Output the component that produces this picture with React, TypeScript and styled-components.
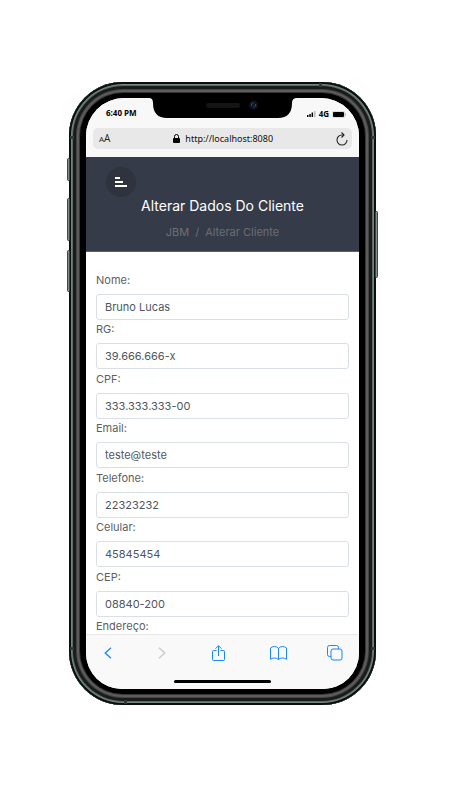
import React from "react";
import styled, { createGlobalStyle } from "styled-components";

const Global = createGlobalStyle`
  * { box-sizing: border-box; }
  body { margin: 0; background: #fff; font-family: Inter, "Open Sans", sans-serif; }
  button { border: 0; padding: 0; background: none; cursor: pointer; display: grid; place-items: center; }
  svg { display: block; }
`;

const Page = styled.main`
  display: flex;
  justify-content: center;
  min-height: 100vh;
  padding: 82px 73px 82px 69px;
`;

const Phone = styled.div`
  position: relative;
  display: flex;
  flex: 1;
  max-width: 440px;
  padding: 16px 17px;
  border-radius: 54px;
  background: #000;
  box-shadow:
    inset 0 0 0 2px #0b0f0e,
    inset 0 0 0 3px #72857f,
    inset 0 0 0 4px #5c6d68,
    inset 0 0 0 7px #1a1c1b,
    inset 0 0 0 8px #444,
    inset 0 0 0 10px #5c5c5c,
    inset 0 0 0 11px #363636;
`;

const SideKey = styled.i<{ $side: "left" | "right"; $top: number; $size: number }>`
  position: absolute;
  ${(p) => p.$side}: -2px;
  top: ${(p) => p.$top}px;
  width: 3px;
  height: ${(p) => p.$size}px;
  border: 1px solid #3d4946;
  border-radius: 2px;
  background: #7d8f89;
`;

const Band = styled.i<{ $edge: "left" | "right" | "top" | "bottom"; $at: number }>`
  position: absolute;
  ${(p) => p.$edge}: 1px;
  ${(p) =>
    p.$edge === "left" || p.$edge === "right"
      ? `${p.$at < 0 ? "bottom" : "top"}: ${Math.abs(p.$at)}px; width: 4px; height: 3px;`
      : `${p.$at < 0 ? "right" : "left"}: ${Math.abs(p.$at)}px; width: 3px; height: 4px;`}
  background: #2f3a37;
`;

const Screen = styled.div`
  position: relative;
  display: flex;
  flex: 1;
  flex-direction: column;
  min-width: 0;
  overflow: hidden;
  border-radius: 38px 38px 36px 36px;
  background: #fff;
`;

const Notch = styled.svg`
  position: absolute;
  top: 0;
  left: 50%;
  width: 148px;
  height: 20px;
  transform: translateX(-50%);
`;

const StatusBar = styled.div`
  display: flex;
  justify-content: space-between;
  align-items: center;
  height: 30px;
  padding: 0 13px 0 20px;
  background: #f8f8f8;
  color: #000;
  font: 700 8px/12px "Open Sans", sans-serif;
`;

const Signals = styled.div`
  display: flex;
  align-items: center;
  gap: 3px;
  padding-top: 2px;
`;

const AddressRow = styled.div`
  padding: 0 7px 8px;
  background: #f8f8f8;
`;

const AddressBar = styled.div`
  display: flex;
  justify-content: space-between;
  align-items: center;
  height: 21px;
  padding: 0 4px 0 6px;
  border-radius: 5px;
  background: #e8e8e8;
`;

const TextSize = styled.button`
  color: #222;
  font: 10px/14px "Open Sans", sans-serif;
  grid-auto-flow: column;
  align-items: baseline;
  small { font-size: 8px; }
`;

const Address = styled.span`
  display: flex;
  align-items: center;
  gap: 5px;
  color: #111;
  font: 9px/14px "Noto Sans", "Open Sans", sans-serif;
`;

const Header = styled.header`
  display: flex;
  flex-direction: column;
  height: 95px;
  padding: 10px 20px 0;
  border-bottom: 1px solid #5c5c6c;
  background: #363b49;
`;

const MenuButton = styled.button`
  width: 30px;
  height: 30px;
  border-radius: 50%;
  background: #2f333e;
`;

const Title = styled.h1`
  margin: 0;
  color: #fff;
  font-size: 14px;
  font-weight: 400;
  line-height: 18px;
  text-align: center;
`;

const Crumbs = styled.nav`
  display: flex;
  justify-content: center;
  gap: 6px;
  margin-top: 9px;
  color: #6a6e75;
  font-size: 11px;
  line-height: 16px;
  a { color: #6d6f75; text-decoration: none; }
`;

const Form = styled.form`
  display: flex;
  flex: 1;
  flex-direction: column;
  justify-content: space-between;
  padding: 20px 10px 0;
`;

const Field = styled.div`
  display: flex;
  flex-direction: column;
  gap: 6px;
`;

const Label = styled.label`
  color: #606060;
  font-size: 11px;
  line-height: 16px;
`;

const TextInput = styled.input`
  width: 100%;
  height: 26px;
  padding: 0 8px;
  border: 1px solid #dadee5;
  border-radius: 3px;
  background: #fff;
  color: #50565c;
  font: 11px/16px Inter, sans-serif;
`;

const Toolbar = styled.nav`
  display: grid;
  grid-template-columns: 54fr 56fr 60fr 57fr 16px;
  align-items: center;
  height: 37px;
  padding: 0 16px 0 14px;
  border-top: 1px solid #e8e8e8;
  background: #f9f9f9;
  color: #1a86f7;
`;

const ToolButton = styled.button`
  width: 16px;
  height: 20px;
  color: inherit;
  &:disabled { color: #c8c8c8; }
`;

const HomeArea = styled.div`
  display: grid;
  justify-content: center;
  height: 18px;
  padding-top: 9px;
  background: #f9f9f9;
`;

const HomeBar = styled.div`
  width: 97px;
  height: 3px;
  border-radius: 2px;
  background: #000;
`;

const fields = [
  { id: "nome", label: "Nome:", value: "Bruno Lucas" },
  { id: "rg", label: "RG:", value: "39.666.666-x" },
  { id: "cpf", label: "CPF:", value: "333.333.333-00" },
  { id: "email", label: "Email:", value: "teste@teste" },
  { id: "telefone", label: "Telefone:", value: "22323232" },
  { id: "celular", label: "Celular:", value: "45845454" },
  { id: "cep", label: "CEP:", value: "08840-200" },
];

const line = { fill: "none", stroke: "currentColor", strokeWidth: 1 } as const;

export default function App() {
  return (
    <Page>
      <Global />
      <Phone>
        <SideKey $side="left" $top={76} $size={23} />
        <SideKey $side="left" $top={116} $size={43} />
        <SideKey $side="left" $top={168} $size={42} />
        <SideKey $side="right" $top={129} $size={67} />
        <Band $edge="left" $at={54} />
        <Band $edge="right" $at={54} />
        <Band $edge="left" $at={-55} />
        <Band $edge="right" $at={-55} />
        <Band $edge="top" $at={-54} />
        <Band $edge="bottom" $at={55} />
        <Screen>
          <StatusBar>
            <span>6:40 PM</span>
            <Signals>
              <svg width="9" height="6" viewBox="0 0 9 6">
                <path d="M0 4h1.5v2H0zM2.3 3h1.5v3H2.3zM4.6 1.5h1.5V6H4.6z" fill="#000" />
                <path d="M7 0h1.5v6H7z" fill="#bbb" />
              </svg>
              <span>4G</span>
              <svg width="14" height="7" viewBox="0 0 14 7">
                <rect x=".3" y=".3" width="12.4" height="6.4" rx="1.5" fill="#fff" stroke="#aaa" strokeWidth=".5" />
                <rect x="1" y="1" width="11" height="5" rx="1" fill="#000" />
                <path d="M13.400 2.500v2" stroke="#999" strokeWidth=".7" />
              </svg>
            </Signals>
          </StatusBar>
          <Notch viewBox="0 0 148 20">
            <path d="M0 0h148q-5 0-5 5 0 15-14 15H18Q4 20 4 5 4 0 0 0z" fill="#000" />
            <rect x="57" y="5" width="34" height="5" rx="2.5" fill="#141414" />
            <circle cx="104.500" cy="7" r="4.5" fill="#11141c" />
            <path d="M102.500 8q-.5-3 2-3M106.500 6q.5 3-2 3" fill="none" stroke="#244f94" />
          </Notch>
          <AddressRow>
            <AddressBar>
              <TextSize type="button" aria-label="Text size"><small>A</small>A</TextSize>
              <Address>
                <svg width="7" height="9" viewBox="0 0 7 9">
                  <rect y="4" width="7" height="5" rx="1" fill="#000" />
                  <path d="M1.5 4V2.5a2 2 0 0 1 4 0V4" fill="none" stroke="#000" />
                </svg>
                http://localhost:8080
              </Address>
              <button type="button" aria-label="Reload">
                <svg width="12" height="14" viewBox="0 0 12 14" fill="none" stroke="#222" strokeWidth="1.1">
                  <path d="M7.8 3H6a5 5 0 1 0 5 5" />
                  <path d="M5.5.5 8 3 5.5 5.5" />
                </svg>
              </button>
            </AddressBar>
          </AddressRow>
          <Header>
            <MenuButton type="button" aria-label="Menu">
              <svg width="12" height="10" viewBox="0 0 12 10">
                <path d="M0 0h5v2H0zM0 4h8v2H0zM0 8h12v2H0z" fill="#fff" />
              </svg>
            </MenuButton>
            <Title>Alterar Dados Do Cliente</Title>
            <Crumbs>
              <a href="#jbm">JBM</a>
              <span>/</span>
              <span>Alterar Cliente</span>
            </Crumbs>
          </Header>
          <Form>
            {fields.map((f) => (
              <Field key={f.id}>
                <Label htmlFor={f.id}>{f.label}</Label>
                <TextInput id={f.id} defaultValue={f.value} />
              </Field>
            ))}
            <Label as="span">Endereço:</Label>
          </Form>
          <Toolbar>
            <ToolButton type="button" aria-label="Back">
              <svg width="8" height="12" viewBox="0 0 8 12" {...line} strokeWidth={1.3}><path d="M7 .7 1.2 6 7 11.3" /></svg>
            </ToolButton>
            <ToolButton type="button" aria-label="Forward" disabled>
              <svg width="8" height="12" viewBox="0 0 8 12" {...line} strokeWidth={1.3}><path d="M1 .7 6.8 6 1 11.3" /></svg>
            </ToolButton>
            <ToolButton type="button" aria-label="Share">
              <svg width="13" height="16" viewBox="0 0 13 16" {...line}>
                <path d="M4.5 5.5h-3q-1 0-1 1v8q0 1 1 1h10q1 0 1-1v-8q0-1-1-1h-3M6.5 11V1M3.5 3.7l3-3 3 3" />
              </svg>
            </ToolButton>
            <ToolButton type="button" aria-label="Bookmarks">
              <svg width="17" height="14" viewBox="0 0 17 14" {...line}>
                <path d="M8.5 2.5v11M8.5 2.5Q7 .5 4.5.5T.5 2v11.3Q2 12 4.5 12t4 1.5Q10 12 12.5 12t4 1.3V2Q15 .5 12.5.5t-4 2z" />
              </svg>
            </ToolButton>
            <ToolButton type="button" aria-label="Tabs">
              <svg width="16" height="16" viewBox="0 0 16 16" {...line}>
                <rect x="4" y="4" width="11" height="11" rx="2" />
                <path d="M4 11.5H2.5q-2 0-2-2v-7q0-2 2-2h7q2 0 2 2V4" />
              </svg>
            </ToolButton>
          </Toolbar>
          <HomeArea><HomeBar /></HomeArea>
        </Screen>
      </Phone>
    </Page>
  );
}
